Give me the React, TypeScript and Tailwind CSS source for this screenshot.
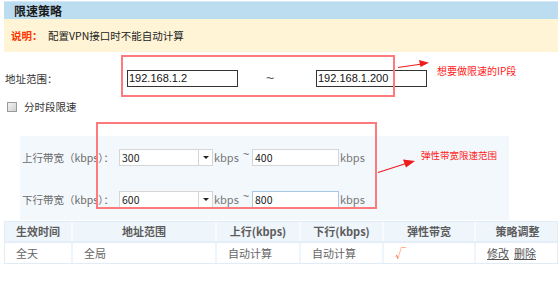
import React from "react";

const cjk = { fontFamily: '"Noto Sans CJK SC", "Noto Sans", sans-serif' };
const mono = { fontFamily: '"Liberation Sans", Arial, sans-serif' };

function BwRow({ label, a, b, focus }: { label: string; a: string; b: string; focus?: boolean }) {
  return (
    <div className="flex items-center h-[17px]">
      <div className="w-[99px] pl-[2px] whitespace-nowrap text-[10.5px] text-[#6a6a6a]" style={cjk}>
        {label}
      </div>
      <div className="w-[80px] h-[17px] bg-white border border-[#d6d6d6] flex items-center pl-[2px] text-[10.5px] text-[#222]" style={cjk}>
        {a}
      </div>
      <div className="w-[14px] h-[17px] bg-white border border-l-0 border-[#d6d6d6] flex items-center justify-center">
        <div className="w-0 h-0 border-l-[3px] border-r-[3px] border-t-[3px] border-l-transparent border-r-transparent border-t-[#222]" />
      </div>
      <div className="w-[27px] pl-[1px] text-[11px] text-[#777]" style={cjk}>kbps</div>
      <div className="w-[12px] text-center text-[11px] text-[#666] leading-none -mt-[6px]" style={mono}>~</div>
      <div
        className={`w-[87px] h-[17px] bg-white border flex items-center pl-[2px] text-[10.5px] text-[#222] ${focus ? "border-[#a9c8e6]" : "border-[#d6d6d6]"}`}
        style={cjk}
      >
        {b}
      </div>
      <div className="pl-[1px] text-[11px] text-[#777]" style={cjk}>kbps</div>
    </div>
  );
}

export default function App() {
  const cols = [
    { w: "w-[68px]", h: "生效时间", b: "全天" },
    { w: "w-[144px]", h: "地址范围", b: "全局" },
    { w: "w-[84px]", h: "上行(kbps)", b: "自动计算" },
    { w: "w-[83px]", h: "下行(kbps)", b: "自动计算" },
    { w: "w-[92px]", h: "弹性带宽", b: "√" },
    { w: "w-[83px]", h: "策略调整", b: "" },
  ];
  return (
    <div className="relative w-[558px] h-[288px] bg-white overflow-hidden" style={cjk}>
      {/* header */}
      <div className="mt-[1px] ml-[4px] h-[18px] bg-[#bcdcf0] border-t border-[#d4e8f6] flex items-center pl-[10px]">
        <span className="text-[12px] font-bold text-[#1a1a1a] leading-none">限速策略</span>
      </div>
      {/* notice */}
      <div className="ml-[4px] h-[33px] bg-[#fff5d6] flex items-center pl-[7px]">
        <span className="w-[37px] text-[10.5px] font-bold text-[#ff3300]">说明：</span>
        <span className="text-[10.5px] text-[#222]">配置VPN接口时不能自动计算</span>
      </div>
      {/* address row */}
      <div className="flex items-center pt-[18px] h-[35px]">
        <div className="w-[127px] pl-[5px] text-[10.5px] text-[#333]">地址范围：</div>
        <div className="w-[111px] h-[17px] border border-[#333] bg-white flex items-center pl-[1px] text-[11px] text-[#111]" style={mono}>
          192.168.1.2
        </div>
        <div className="w-[78px] pl-[28px] text-[14px] text-[#555]" style={mono}>~</div>
        <div className="w-[111px] h-[17px] border border-[#333] bg-white flex items-center pl-[1px] text-[11px] text-[#111]" style={mono}>
          192.168.1.200
        </div>
      </div>
      {/* checkbox row */}
      <div className="flex items-center mt-[14px] pl-[7px] h-[12px]">
        <div className="w-[10px] h-[10px] border border-[#9a9a9a] bg-gradient-to-br from-[#f4f4f4] to-[#cfcfcf]" />
        <span className="ml-[7px] text-[10.5px] text-[#333]">分时段限速</span>
      </div>
      {/* bandwidth panel */}
      <div className="ml-[20px] mt-[23px] w-[489px] h-[84px] bg-[#f3f8fc] pt-[13px] flex flex-col gap-[25px]">
        <BwRow label="上行带宽（kbps）：" a="300" b="400" />
        <BwRow label="下行带宽（kbps）：" a="600" b="800" focus />
      </div>
      {/* table */}
      <div className="ml-[4px] mt-[1px] w-[554px] border border-[#e1ecf7]">
        <div className="flex h-[21px] bg-[#eef5fb] border-b-2 border-[#e4eef8]">
          {cols.map((c, i) => (
            <div
              key={i}
              className={`${c.w} shrink-0 flex items-center justify-center text-[11px] font-bold text-[#5c5c5c] ${i < cols.length - 1 ? "border-r-2 border-[#f8fbfe]" : ""}`}
            >
              {c.h}
            </div>
          ))}
        </div>
        <div className="flex h-[20px] bg-white">
          {cols.map((c, i) => (
            <div
              key={i}
              className={`${c.w} shrink-0 flex items-center pl-[11px] text-[11px] ${i === 4 ? "text-[#ff6a1a]" : "text-[#666]"} ${i < cols.length - 1 ? "border-r-2 border-[#eef5fb]" : ""}`}
            >
              {i === 5 ? (
                <span className="flex gap-[5px] text-[#555]">
                  <span className="underline">修改</span>
                  <span className="underline">删除</span>
                </span>
              ) : (
                c.b
              )}
            </div>
          ))}
        </div>
      </div>

      {/* annotations */}
      <div className="absolute left-[121px] top-[55px] w-[274px] h-[42px] border-2 border-[#ff7b7b]" />
      <div className="absolute left-[96px] top-[122px] w-[281px] h-[87px] border-2 border-[#ff7b7b]" />
      <svg className="absolute left-0 top-0" width="558" height="288" viewBox="0 0 558 288">
        <line x1="398" y1="67.5" x2="422" y2="64" stroke="#ee1c1c" strokeWidth="1.2" />
        <polygon points="429,62.8 419,60 420.5,67" fill="#ee1c1c" />
        <line x1="378" y1="172.5" x2="406" y2="163.5" stroke="#ee1c1c" strokeWidth="1.2" />
        <polygon points="415,161 403,159.5 406,167.5" fill="#ee1c1c" />
      </svg>
      <div className="absolute left-[437px] top-[64px] text-[10px] text-[#ff1a1a] leading-[14px] whitespace-nowrap">
        想要做限速的IP段
      </div>
      <div className="absolute left-[421px] top-[148px] text-[9.5px] text-[#ff1a1a] leading-[14px] whitespace-nowrap">
        弹性带宽限速范围
      </div>
    </div>
  );
}
